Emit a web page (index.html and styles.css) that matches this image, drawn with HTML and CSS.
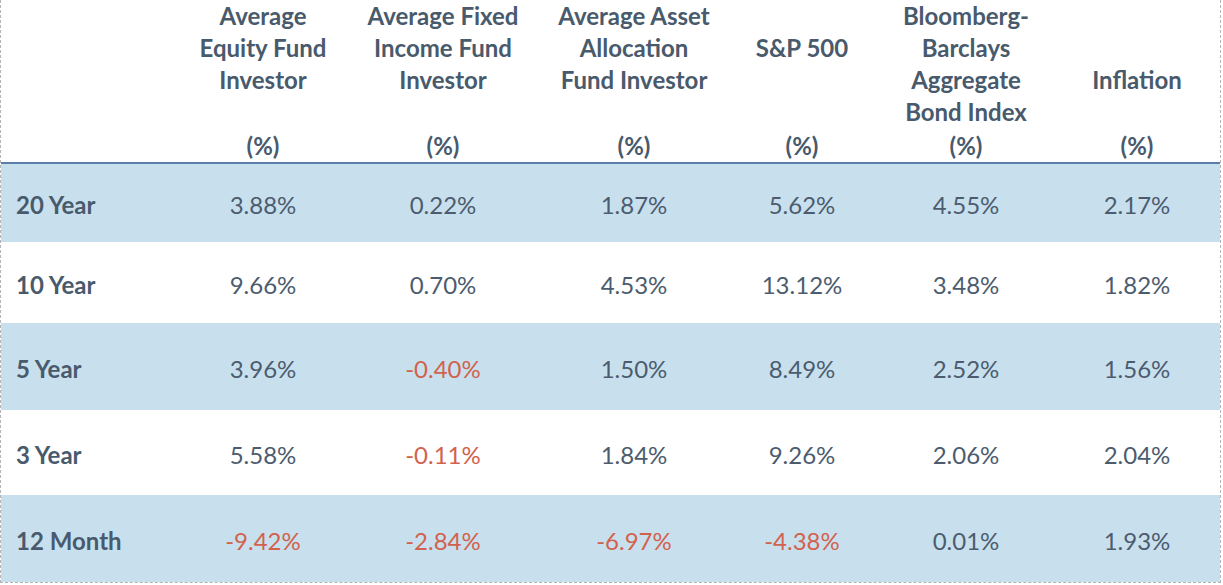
FILE: index.html
```html
<!DOCTYPE html>
<html lang="en">
<head>
<meta charset="utf-8">
<title>Average Investor Returns</title>
<link rel="stylesheet" href="styles.css">
</head>
<body>
<div class="table">
  <div class="row head">
    <div class="hcell"></div>
    <div class="hcell"><div class="title">Average<br>Equity Fund<br>Investor</div><div class="unit">(%)</div></div>
    <div class="hcell"><div class="title">Average Fixed<br>Income Fund<br>Investor</div><div class="unit">(%)</div></div>
    <div class="hcell"><div class="title">Average Asset<br>Allocation<br>Fund Investor</div><div class="unit">(%)</div></div>
    <div class="hcell"><div class="title down1">S&amp;P 500</div><div class="unit">(%)</div></div>
    <div class="hcell"><div class="title">Bloomberg-<br>Barclays<br>Aggregate<br>Bond Index</div><div class="unit">(%)</div></div>
    <div class="hcell"><div class="title down2">Inflation</div><div class="unit">(%)</div></div>
  </div>
  <div class="row body blue r1">
    <div class="label">20 Year</div>
    <div class="val">3.88%</div><div class="val">0.22%</div><div class="val">1.87%</div><div class="val">5.62%</div><div class="val">4.55%</div><div class="val">2.17%</div>
  </div>
  <div class="row body r2">
    <div class="label">10 Year</div>
    <div class="val">9.66%</div><div class="val">0.70%</div><div class="val">4.53%</div><div class="val">13.12%</div><div class="val">3.48%</div><div class="val">1.82%</div>
  </div>
  <div class="row body blue r3">
    <div class="label">5 Year</div>
    <div class="val">3.96%</div><div class="val neg">-0.40%</div><div class="val">1.50%</div><div class="val">8.49%</div><div class="val">2.52%</div><div class="val">1.56%</div>
  </div>
  <div class="row body r4">
    <div class="label">3 Year</div>
    <div class="val">5.58%</div><div class="val neg">-0.11%</div><div class="val">1.84%</div><div class="val">9.26%</div><div class="val">2.06%</div><div class="val">2.04%</div>
  </div>
  <div class="row body blue r5">
    <div class="label">12 Month</div>
    <div class="val neg">-9.42%</div><div class="val neg">-2.84%</div><div class="val neg">-6.97%</div><div class="val neg">-4.38%</div><div class="val">0.01%</div><div class="val">1.93%</div>
  </div>
</div>
</body>
</html>
```
FILE: styles.css
```css
html, body {
  margin: 0;
  padding: 0;
  background: #ffffff;
}

body {
  width: 1223px;
  height: 585px;
  overflow: hidden;
  font-family: Lato, "Open Sans", "Liberation Sans", sans-serif;
  color: #4a5a6c;
}

.table {
  width: 1219px;
  border-left: 1px dashed #b4b4b4;
  border-right: 1px dashed #b4b4b4;
  border-bottom: 1px dashed #b4b4b4;
}

.row {
  display: grid;
  grid-template-columns: 180px 164px 196px 186px 150px 178px 164px;
}

.head {
  height: 162px;
  border-bottom: 2px solid #5a7fa9;
}

.hcell {
  display: flex;
  flex-direction: column;
  justify-content: space-between;
  align-items: center;
  text-align: center;
  font-weight: 700;
  font-size: 24px;
  line-height: 32px;
  color: #485a6c;
}

.title.down1 {
  padding-top: 32px;
}

.title.down2 {
  padding-top: 64px;
}

.body {
  align-items: center;
  font-size: 24px;
  line-height: 28px;
  padding-top: 4px;
  box-sizing: border-box;
}

.blue {
  background: #c8e0ee;
}

.r1 { height: 78px; }
.r2 { height: 81px; }
.r3 { height: 87px; }
.r4 { height: 85px; }
.r5 { height: 87px; }

.label {
  padding-left: 15px;
  font-weight: 700;
  color: #485a6c;
}

.val {
  text-align: center;
  color: #4c5c6e;
}

.val.neg {
  color: #d2624d;
}
```
